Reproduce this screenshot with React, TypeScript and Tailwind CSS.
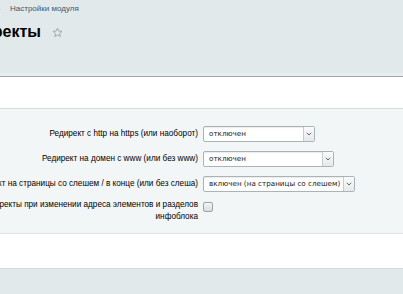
import React from "react";

function Select({ value, width }: { value: string; width: string }) {
  return (
    <div
      className={`${width} h-[16px] flex items-stretch bg-white border border-[#a9b4b8] rounded-[2px] shadow-[inset_0_1px_1px_rgba(0,0,0,0.08)]`}
    >
      <div className="flex-1 flex items-center pl-[5px] text-[7.2px] text-[#222] font-['DejaVu_Sans',sans-serif] whitespace-nowrap overflow-hidden leading-none">
        {value}
      </div>
      <div className="w-[11px] flex items-center justify-center border-l border-[#c4cccf] bg-[linear-gradient(#fafafa,#e6e9ea)]">
        <svg width="6" height="4" viewBox="0 0 6 4">
          <path d="M0.8 0.8 L3 3 L5.2 0.8" fill="none" stroke="#555" strokeWidth="0.9" />
        </svg>
      </div>
    </div>
  );
}

function Label({ children }: { children: React.ReactNode }) {
  return (
    <div className="flex justify-end items-center text-right whitespace-nowrap text-[8.2px] text-[#000] font-['Liberation_Sans',Arial,sans-serif] leading-[12px]">
      <div>{children}</div>
    </div>
  );
}

export default function App() {
  return (
    <div className="w-[403px] h-[294px] overflow-hidden bg-[#e1e9ea] flex flex-col font-['Liberation_Sans',Arial,sans-serif]">
      <div className="h-[73px] shrink-0 relative">
        <div className="flex items-center h-[16px] pt-[1px]">
          <span className="text-[8px] text-[#a9b3b8] ml-[-2px] w-[12px]">-</span>
          <span className="text-[8px] text-[#3e5770]">Настройки модуля</span>
        </div>
        <div className="flex items-center h-[30px] mt-[1px]">
          <div className="w-[41px] flex justify-end overflow-visible">
            <span className="text-[16px] font-bold text-[#000] whitespace-nowrap leading-none">Редиректы</span>
          </div>
          <svg className="ml-[11px]" width="11" height="11" viewBox="0 0 24 24">
            <path
              d="M12 2.5l2.9 6.3 6.9.7-5.2 4.6 1.5 6.8L12 17.4l-6.1 3.5 1.5-6.8-5.2-4.6 6.9-.7z"
              fill="none"
              stroke="#9aa6ab"
              strokeWidth="2"
              strokeLinejoin="round"
            />
          </svg>
        </div>
      </div>
      <div className="h-[3px] shrink-0 bg-[#e8eef0]" />
      <div className="h-[1px] shrink-0 bg-[#9ea8ab]" />
      <div className="h-[31px] shrink-0 bg-white" />
      <div className="h-[1px] shrink-0 bg-[#d5dcde]" />
      <div className="h-[124px] shrink-0 bg-[#f3f6f7] pt-[12px]">
        <div className="grid grid-cols-[198px_1fr] gap-x-[5px]">
          <div className="h-[25px] flex justify-end items-center"><Label>Редирект с http на https (или наоборот)</Label></div>
          <div className="h-[25px] flex items-center"><Select value="отключен" width="w-[112px]" /></div>
          <div className="h-[25px] flex justify-end items-center"><Label>Редирект на домен с www (или без www)</Label></div>
          <div className="h-[25px] flex items-center"><Select value="отключен" width="w-[131px]" /></div>
          <div className="h-[25px] flex justify-end items-center"><Label>Редирект на страницы со слешем / в конце (или без слеша)</Label></div>
          <div className="h-[25px] flex items-center"><Select value="включен (на страницы со слешем)" width="w-[152px]" /></div>
          <div className="flex justify-end pt-[3px]">
            <Label>
              Создавать редиректы при изменении адреса элементов и разделов
              <br />
              инфоблока
            </Label>
          </div>
          <div className="pt-[6px]">
            <div className="w-[10px] h-[10px] border border-[#9aa3a7] rounded-[2px] bg-[linear-gradient(#f4f4f4,#d9dcdd)]" />
          </div>
        </div>
      </div>
      <div className="h-[1px] shrink-0 bg-[#dde3e5]" />
      <div className="h-[34px] shrink-0 bg-white" />
      <div className="h-[1px] shrink-0 bg-[#d5dcde]" />
      <div className="flex-1 bg-[#e1e9ea]" />
    </div>
  );
}
